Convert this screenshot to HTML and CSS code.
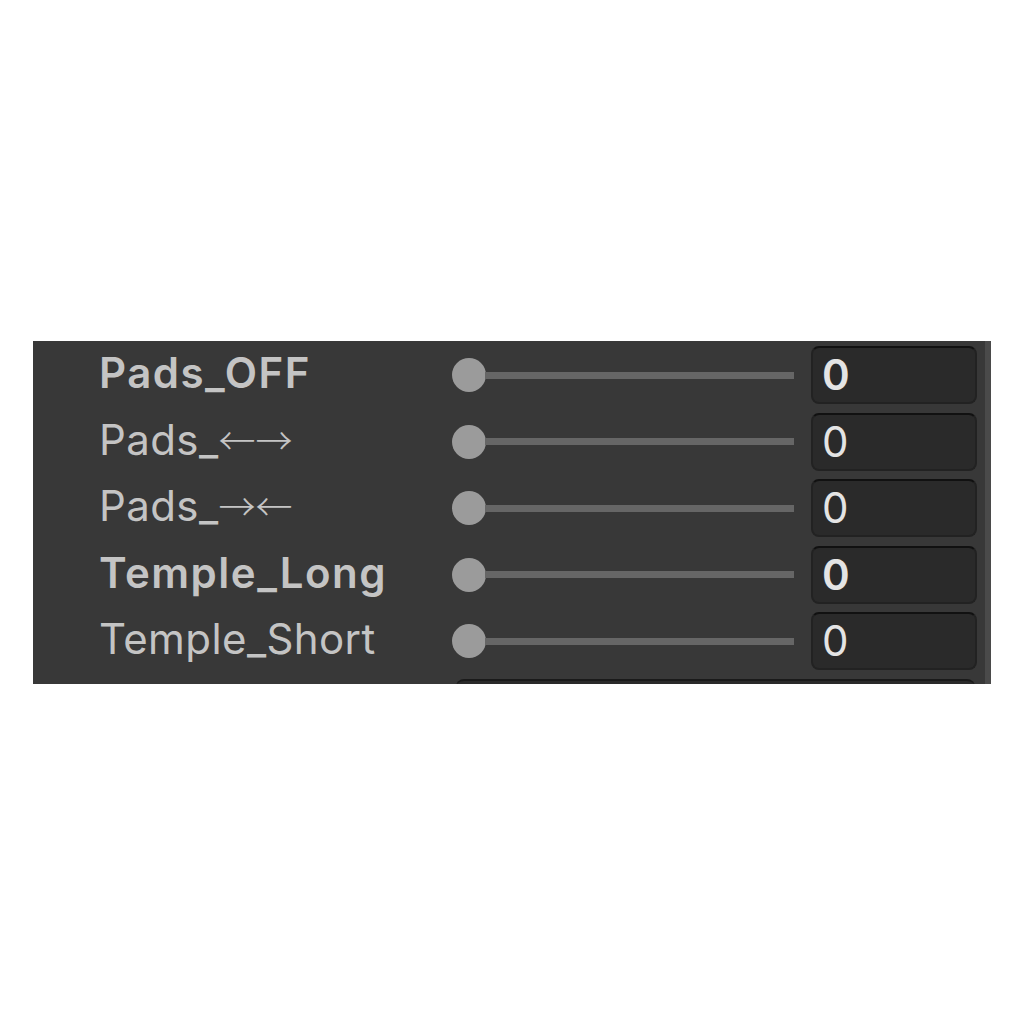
FILE: index.html
```html
<!DOCTYPE html>
<html>
<head>
<meta charset="utf-8">
<link rel="stylesheet" href="styles.css">
</head>
<body>
<div class="panel">
  <div class="rows">
    <div class="row">
      <div class="label bold">Pads_OFF</div>
      <div class="slider"><div class="thumb"></div><div class="track"></div></div>
      <div class="field bold">0</div>
    </div>
    <div class="row">
      <div class="label">Pads_<span class="arr">←→</span></div>
      <div class="slider"><div class="thumb"></div><div class="track"></div></div>
      <div class="field">0</div>
    </div>
    <div class="row">
      <div class="label">Pads_<span class="arr">→←</span></div>
      <div class="slider"><div class="thumb"></div><div class="track"></div></div>
      <div class="field">0</div>
    </div>
    <div class="row">
      <div class="label bold">Temple_Long</div>
      <div class="slider"><div class="thumb"></div><div class="track"></div></div>
      <div class="field bold">0</div>
    </div>
    <div class="row">
      <div class="label">Temple_Short</div>
      <div class="slider"><div class="thumb"></div><div class="track"></div></div>
      <div class="field">0</div>
    </div>
    <div class="row partial">
      <div class="wide-field"></div>
    </div>
  </div>
  <div class="edge"></div>
</div>
</body>
</html>
```
FILE: styles.css
```css
html, body {
  margin: 0;
  padding: 0;
  background: #ffffff;
  width: 1024px;
  height: 1024px;
}
body {
  padding-top: 341px;
  padding-left: 33px;
  box-sizing: border-box;
}
.panel {
  width: 958px;
  height: 343px;
  background: #383838;
  display: flex;
  overflow: hidden;
}
.rows {
  flex: 1;
  padding-top: 1px;
  padding-right: 8px;
  display: flex;
  flex-direction: column;
}
.edge {
  width: 6px;
  background: #4a4a4a;
  flex: none;
}
.row {
  height: 66.5px;
  flex: none;
  display: flex;
  align-items: center;
  padding-left: 66px;
  box-sizing: border-box;
}
.label {
  width: 353px;
  flex: none;
  font-family: Inter, "Noto Sans", sans-serif;
  font-size: 42px;
  letter-spacing: 0.4px;
  color: #c4c4c4;
  white-space: nowrap;
  line-height: 1;
  position: relative;
  top: -2px;
}
.label.bold { font-weight: 600; letter-spacing: 1.5px; }
.arr {
  font-family: "Noto Sans CJK JP", sans-serif;
  font-size: 37px;
  font-weight: 300;
  letter-spacing: 0;
}
.slider {
  width: 342px;
  flex: none;
  display: flex;
  align-items: center;
}
.thumb {
  width: 34px;
  height: 34px;
  border-radius: 50%;
  background: #9b9b9b;
  flex: none;
}
.track {
  width: 309px;
  height: 7px;
  background: #666666;
  flex: none;
  margin-left: -1px;
}
.field {
  margin-left: 17px;
  width: 166px;
  height: 58px;
  box-sizing: border-box;
  border-radius: 8px;
  background: #2a2a2a;
  border: 2px solid #222222;
  border-top-color: #111111;
  font-family: Inter, "Noto Sans", sans-serif;
  font-size: 42px;
  color: #e4e4e4;
  display: flex;
  align-items: center;
  padding-left: 9px;
  line-height: 1;
}
.field.bold { font-weight: 600; }
.row.partial {
  align-items: flex-start;
  padding-left: 423px;
  padding-top: 4px;
}
.wide-field {
  width: 519px;
  height: 58px;
  border-radius: 8px;
  background: #2a2a2a;
  border-top: 2px solid #1a1a1a;
  box-sizing: border-box;
}
```
